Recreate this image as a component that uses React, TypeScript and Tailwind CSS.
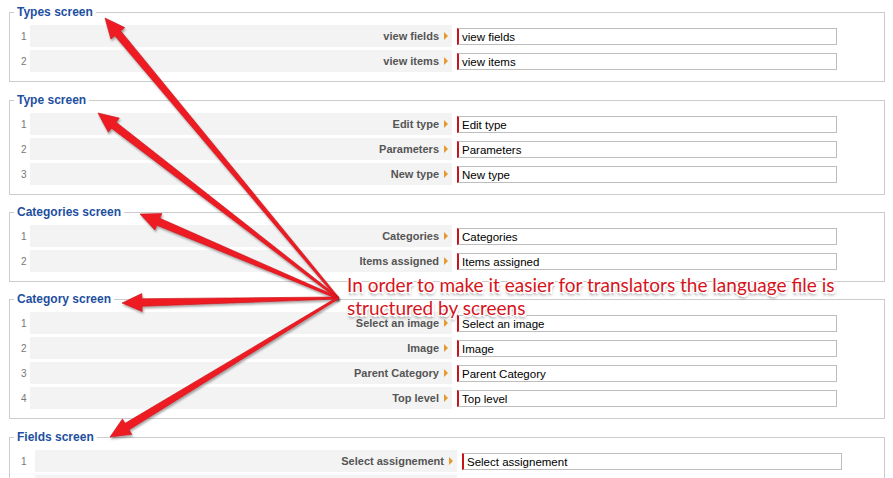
import React from "react";

const SCREENS: { title: string; rows: string[]; wide?: boolean; gap: string }[] = [
  { title: "Types screen", rows: ["view fields", "view items"], gap: "" },
  { title: "Type screen", rows: ["Edit type", "Parameters", "New type"], gap: "mt-[11px]" },
  { title: "Categories screen", rows: ["Categories", "Items assigned"], gap: "mt-[10px]" },
  { title: "Category screen", rows: ["Select an image", "Image", "Parent Category", "Top level"], gap: "mt-[10px]" },
  { title: "Fields screen", rows: ["Select assignement", ""], wide: true, gap: "mt-[11px]" },
];

const BASE = { x: 338, y: 298 };
const TIPS = [
  { x: 105, y: 18 },
  { x: 98, y: 113 },
  { x: 140, y: 214 },
  { x: 122, y: 303 },
  { x: 110, y: 437 },
];

function arrowPoints(tip: { x: number; y: number }) {
  const dx = tip.x - BASE.x;
  const dy = tip.y - BASE.y;
  const len = Math.hypot(dx, dy);
  const ux = dx / len;
  const uy = dy / len;
  const nx = -uy;
  const ny = ux;
  const headLen = 20;
  const hx = tip.x - ux * headLen;
  const hy = tip.y - uy * headLen;
  const pts = [
    [BASE.x + nx * 1, BASE.y + ny * 1],
    [hx + nx * 3.8, hy + ny * 3.8],
    [hx + nx * 9, hy + ny * 9],
    [tip.x, tip.y],
    [hx - nx * 9, hy - ny * 9],
    [hx - nx * 3.8, hy - ny * 3.8],
    [BASE.x - nx * 1, BASE.y - ny * 1],
  ];
  return pts.map((p) => `${p[0].toFixed(1)},${p[1].toFixed(1)}`).join(" ");
}

function FieldRow({ n, label, wide }: { n: number; label: string; wide?: boolean }) {
  return (
    <div className="flex items-center h-[22px]">
      <div className={`${wide ? "w-[25px]" : "w-[20px]"} pl-[11px] text-[10px] text-[#777] shrink-0`}>{label ? n : ""}</div>
      <div className="w-[422px] h-full bg-[#f3f3f3] flex items-center justify-end pr-[4px] shrink-0">
        <span className="text-[11px] font-bold text-[#555]">{label}</span>
        {label && <span className="ml-[5px] w-0 h-0 border-y-[4px] border-y-transparent border-l-[4px] border-l-[#e59a2f]" />}
      </div>
      <div className="ml-[5px] w-[380px] h-[17px] border border-[#bdbdbd] border-l-2 border-l-[#c8141b] bg-white flex items-center pl-[3px] pt-[2px] text-[11.5px] leading-[13px] text-black shrink-0">
        {label}
      </div>
    </div>
  );
}

export default function App() {
  return (
    <div className="relative w-[893px] h-[478px] overflow-hidden bg-white font-['Liberation_Sans',Arial,sans-serif]">
      <div className="pl-[9px] pt-[5px] flex flex-col">
        {SCREENS.map((s) => (
          <fieldset key={s.title} className={`${s.gap} w-[876px] border border-[#cccccc] pb-[9px]`}>
            <legend className="ml-[4px] px-[3px] text-[12px] leading-[14px] font-bold text-[#1e4f9f]">{s.title}</legend>
            <div className="flex flex-col gap-[3px] pt-[6px]">
              {s.rows.map((r, i) => (
                <FieldRow key={i} n={i + 1} label={r} wide={s.wide} />
              ))}
            </div>
          </fieldset>
        ))}
      </div>

      {/* annotation arrows */}
      <svg className="absolute inset-0 pointer-events-none" width={893} height={478}>
        <defs>
          <filter id="sh" x="-20%" y="-20%" width="140%" height="140%">
            <feDropShadow dx="1" dy="2" stdDeviation="1.3" floodColor="#000" floodOpacity="0.35" />
          </filter>
        </defs>
        {TIPS.map((t, i) => (
          <polygon key={i} points={arrowPoints(t)} fill="#ee1c24" stroke="#c4121a" strokeWidth="0.6" filter="url(#sh)" />
        ))}
      </svg>

      <div className="absolute left-[347px] top-[273px] text-[19px] leading-[23px] text-[#d6141c] font-['Lato',sans-serif] [text-shadow:1px_0_0_#fff,-1px_0_0_#fff,0_1px_0_#fff,0_-1px_0_#fff,1px_1px_0_#fff,-1px_-1px_0_#fff,1px_-1px_0_#fff,-1px_1px_0_#fff,2px_2px_0_#fff,1px_3px_3px_rgba(0,0,0,0.5)]">
        <div>In order to make it easier for translators the language file is</div>
        <div>structured by screens</div>
      </div>
    </div>
  );
}
